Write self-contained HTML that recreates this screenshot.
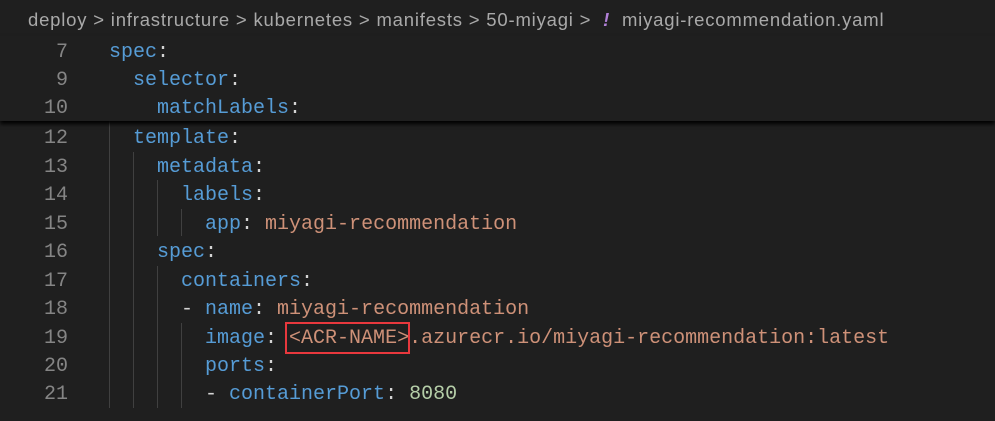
<!DOCTYPE html><html><head><style>
body{margin:0;width:995px;height:421px;background:#1f1f1f;overflow:hidden;position:relative;font-family:"Liberation Mono",monospace}
.bc{position:absolute;left:28px;top:9px;font:18.5px "Liberation Sans",sans-serif;letter-spacing:0.8px;color:#a9a9a9;white-space:pre}
.l{position:absolute;left:0;width:995px;height:28px;line-height:28px;font-size:20px;white-space:pre;color:#d4d4d4}
.n{position:absolute;left:8px;color:#858585;text-align:right;width:60px}
.c{position:absolute;left:109px}
.k{color:#569cd6}.s{color:#ce9178}.d{color:#b5cea8}
.g{position:absolute;width:1px;background:#404040}
.sticky{position:absolute;left:0;top:36px;width:995px;height:85px;background:#1f1f1f;box-shadow:0 3px 4px #000;z-index:2}
</style></head><body>
<div class="bc">deploy &gt; infrastructure &gt; kubernetes &gt; manifests &gt; 50-miyagi &gt;  <span style="color:#b180d7;font-style:italic;font-weight:bold">!</span>  miyagi-recommendation.yaml</div>
<div class="sticky">
<div class="l" style="top:3px"><span class="n">7</span><span class="c"><span class="k">spec</span>:</span></div>
<div class="l" style="top:31px"><span class="n">9</span><span class="c">  <span class="k">selector</span>:</span></div>
<div class="l" style="top:59px"><span class="n">10</span><span class="c">    <span class="k">matchLabels</span>:</span></div>
</div>
<div class="g" style="left:109px;top:121px;height:287px"></div>
<div class="g" style="left:133px;top:152px;height:256px"></div>
<div class="g" style="left:157px;top:180px;height:56px"></div>
<div class="g" style="left:181px;top:209px;height:27px"></div>
<div class="g" style="left:157px;top:266px;height:142px"></div>
<div class="g" style="left:181px;top:323px;height:85px"></div>
<div class="l" style="top:125px"><span class="n">12</span><span class="c">  <span class="k">template</span>:</span></div>
<div class="l" style="top:154px"><span class="n">13</span><span class="c">    <span class="k">metadata</span>:</span></div>
<div class="l" style="top:182px"><span class="n">14</span><span class="c">      <span class="k">labels</span>:</span></div>
<div class="l" style="top:211px"><span class="n">15</span><span class="c">        <span class="k">app</span>: <span class="s">miyagi-recommendation</span></span></div>
<div class="l" style="top:239px"><span class="n">16</span><span class="c">    <span class="k">spec</span>:</span></div>
<div class="l" style="top:268px"><span class="n">17</span><span class="c">      <span class="k">containers</span>:</span></div>
<div class="l" style="top:296px"><span class="n">18</span><span class="c">      - <span class="k">name</span>: <span class="s">miyagi-recommendation</span></span></div>
<div class="l" style="top:325px"><span class="n">19</span><span class="c">        <span class="k">image</span>: <span class="s">&lt;ACR-NAME&gt;.azurecr.io/miyagi-recommendation:latest</span></span></div>
<div class="l" style="top:353px"><span class="n">20</span><span class="c">        <span class="k">ports</span>:</span></div>
<div class="l" style="top:381px"><span class="n">21</span><span class="c">        - <span class="k">containerPort</span>: <span class="d">8080</span></span></div>
<div style="position:absolute;left:285px;top:322px;width:121px;height:28px;border:2px solid #e8383d"></div>
</body></html>
